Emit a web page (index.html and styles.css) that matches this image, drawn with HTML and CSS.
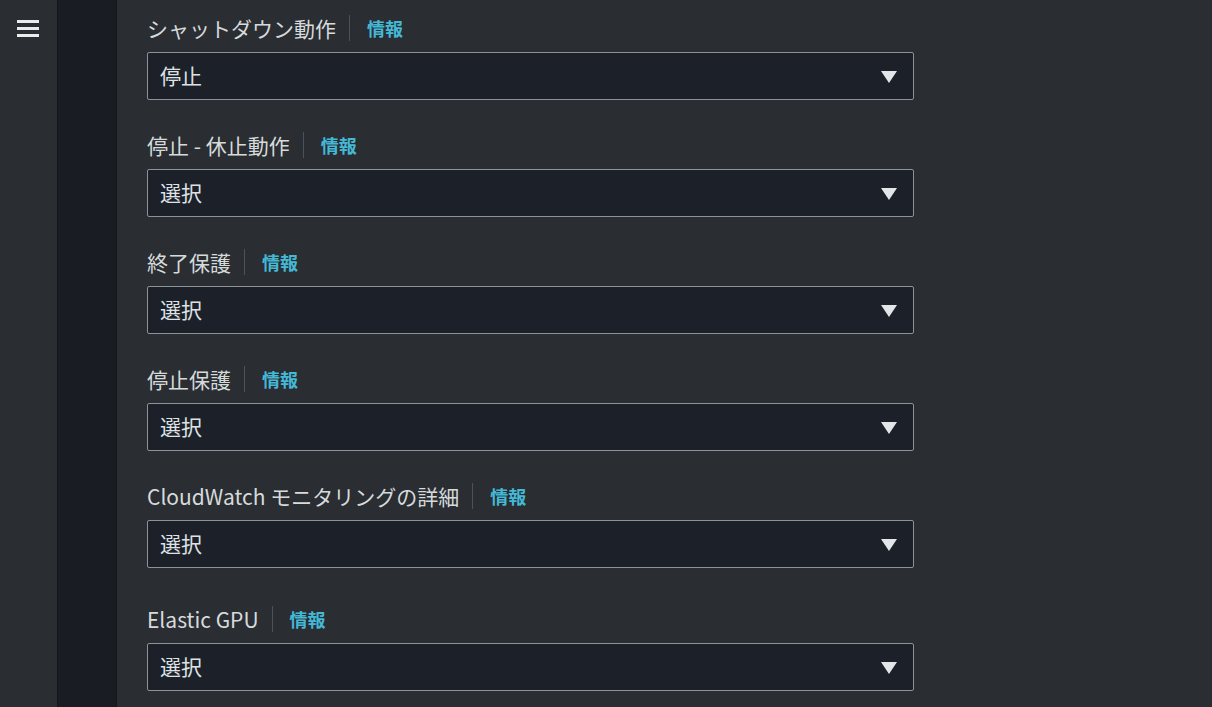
FILE: index.html
```html
<!DOCTYPE html>
<html lang="ja">
<head>
<meta charset="utf-8">
<link rel="stylesheet" href="styles.css">
</head>
<body>
<div class="app">
  <nav class="rail">
    <button class="menu" aria-label="menu">
      <svg width="22" height="18" viewBox="0 0 22 18"><rect x="0" y="1" width="22" height="3" fill="#e9ebed"/><rect x="0" y="8" width="22" height="3" fill="#e9ebed"/><rect x="0" y="15" width="22" height="3" fill="#e9ebed"/></svg>
    </button>
  </nav>
  <div class="strip"></div>
  <main class="content">
    <div class="field">
      <div class="label"><span class="label-text">シャットダウン動作</span><span class="info">情報</span></div>
      <div class="select"><span>停止</span><span class="caret"></span></div>
    </div>
    <div class="field">
      <div class="label"><span class="label-text">停止 - 休止動作</span><span class="info">情報</span></div>
      <div class="select"><span>選択</span><span class="caret"></span></div>
    </div>
    <div class="field">
      <div class="label"><span class="label-text">終了保護</span><span class="info">情報</span></div>
      <div class="select"><span>選択</span><span class="caret"></span></div>
    </div>
    <div class="field">
      <div class="label"><span class="label-text">停止保護</span><span class="info">情報</span></div>
      <div class="select"><span>選択</span><span class="caret"></span></div>
    </div>
    <div class="field">
      <div class="label"><span class="label-text">CloudWatch モニタリングの詳細</span><span class="info">情報</span></div>
      <div class="select"><span>選択</span><span class="caret"></span></div>
    </div>
    <div class="field field-spaced">
      <div class="label"><span class="label-text">Elastic GPU</span><span class="info">情報</span></div>
      <div class="select"><span>選択</span><span class="caret"></span></div>
    </div>
  </main>
</div>
</body>
</html>
```
FILE: styles.css
```css
html, body {
  margin: 0;
  padding: 0;
  height: 100%;
  overflow: hidden;
}
body {
  background: #2a2d32;
  font-family: "Noto Sans CJK JP", "Noto Sans", sans-serif;
  color: #d5dbdb;
}
.app {
  display: flex;
  height: 707px;
}
.rail {
  width: 57px;
  flex: none;
  background: #2a2d32;
  display: flex;
  justify-content: center;
  align-items: flex-start;
}
.menu {
  margin-top: 19px;
  margin-left: -1px;
  padding: 0;
  border: 0;
  background: none;
  width: 22px;
  height: 18px;
  display: block;
}
.menu svg { display: block; }
.strip {
  width: 58px;
  flex: none;
  background: #191c22;
  border-left: 1px solid #14161a;
  border-right: 1px solid #14161a;
}
.content {
  flex: 1;
  padding: 13px 0 0 30px;
  display: flex;
  flex-direction: column;
  gap: 30px;
}
.field {
  width: 767px;
  display: flex;
  flex-direction: column;
  gap: 9px;
}
.field-spaced { margin-top: 6px; }
.label {
  height: 30px;
  display: flex;
  align-items: center;
  font-size: 21px;
  line-height: 30px;
}
.label-text {
  color: #d5dbdb;
  padding-right: 13px;
  border-right: 1px solid #4b525b;
  line-height: 26px;
}
.info {
  margin-left: 17px;
  color: #44b9d6;
  font-weight: 700;
  font-size: 18px;
}
.select {
  box-sizing: border-box;
  height: 48px;
  border: 1px solid #8d9299;
  border-radius: 2px;
  background: #1b2029;
  display: flex;
  align-items: center;
  justify-content: space-between;
  padding: 0 16px 0 12px;
  font-size: 21px;
  color: #dfe2e5;
}
.select span:first-child {
  margin-top: -2px;
}
.caret {
  width: 0;
  height: 0;
  border-left: 8px solid transparent;
  border-right: 8px solid transparent;
  border-top: 12px solid #e3e6e8;
  margin-top: 1px;
}
```
